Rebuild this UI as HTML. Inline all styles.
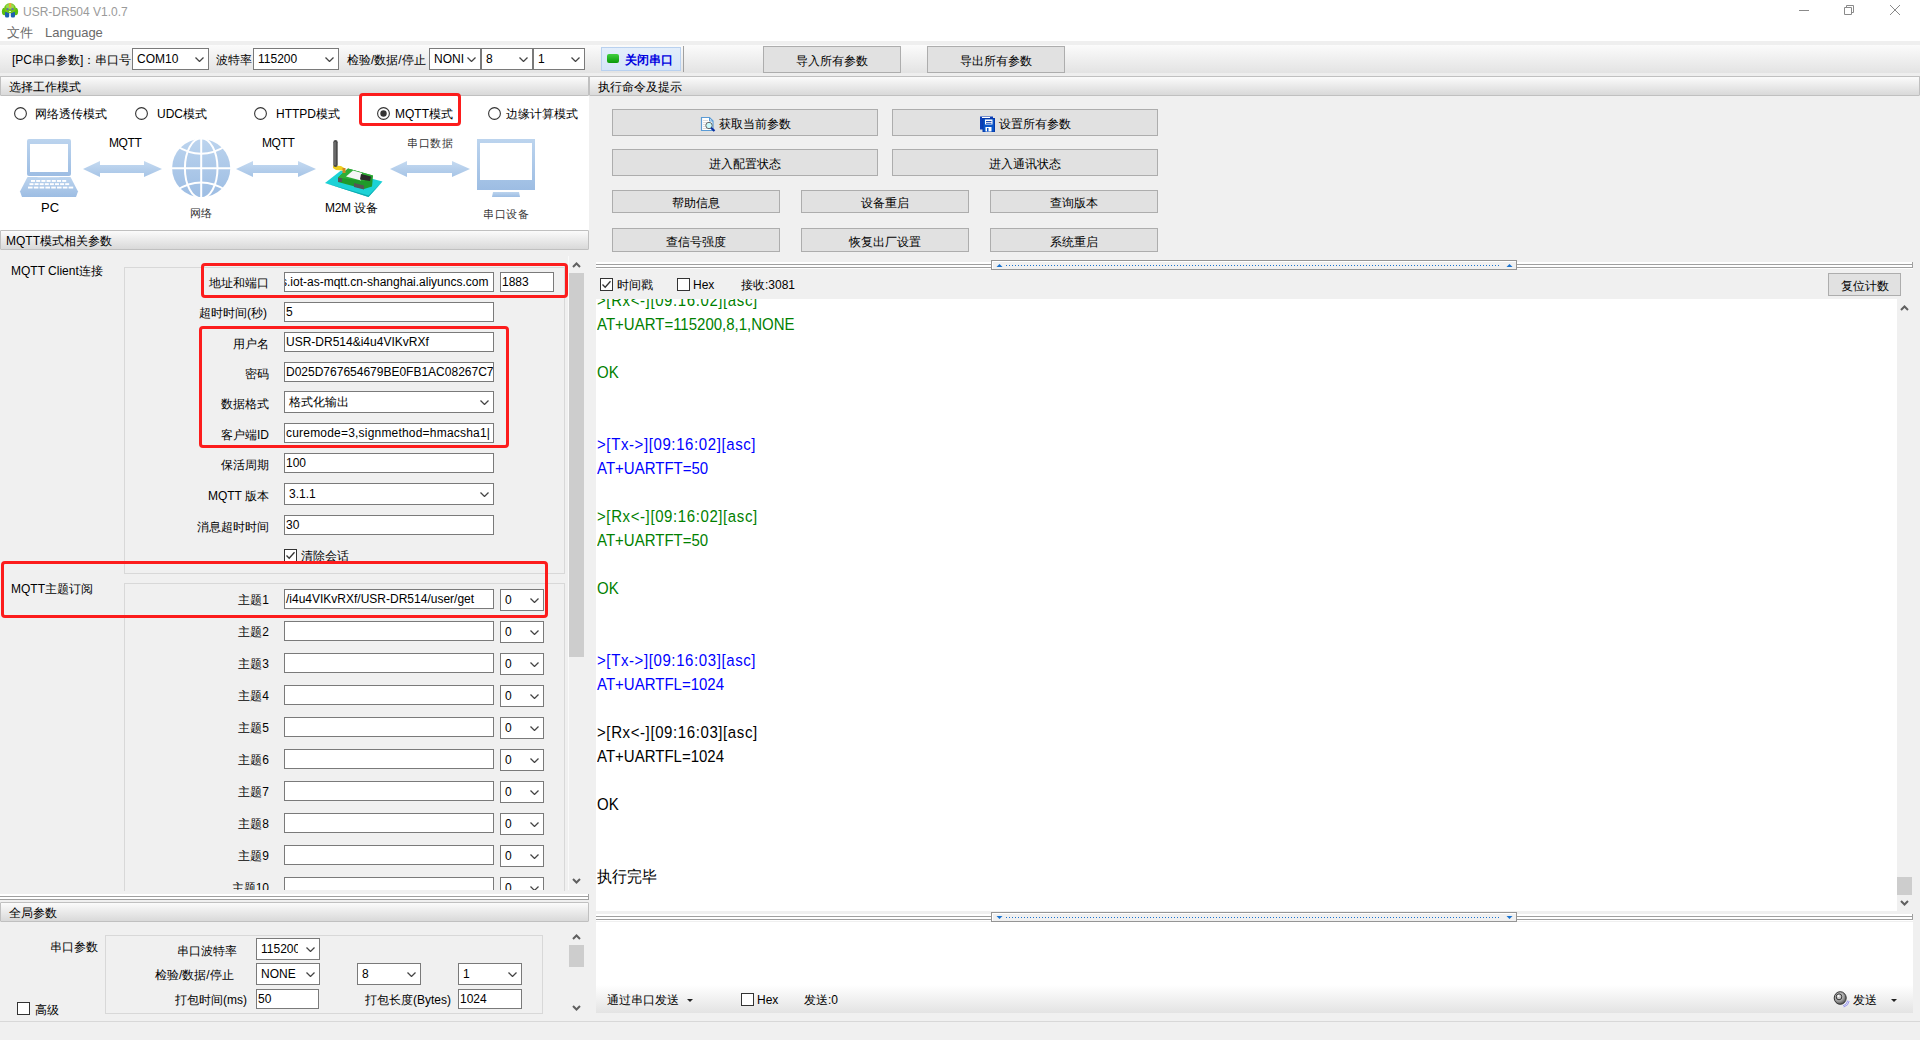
<!DOCTYPE html><html><head><meta charset="utf-8"><style>
html,body{margin:0;padding:0;}
body{width:1920px;height:1040px;position:relative;overflow:hidden;background:#f0f0f0;font-family:"Liberation Sans",sans-serif;font-size:12px;color:#000;}
div{position:absolute;box-sizing:content-box;}
.t{white-space:nowrap;line-height:14px;}
.sel{background:#fff;border:1px solid #7a7a7a;}
.sel .st{position:absolute;left:4px;top:0;bottom:0;display:flex;align-items:center;white-space:nowrap;}
.sel .cv{position:absolute;right:4px;}
.chev{display:block}
.inp{background:#fff;border:1px solid #7a7a7a;white-space:nowrap;overflow:hidden;padding-left:0;text-indent:1px;}
.btn{background:#e1e1e1;border:1px solid #adadad;text-align:center;white-space:nowrap;}
.hdr{background:linear-gradient(#fbfbfb,#d9d9d9);border:1px solid #c0c0c0;border-radius:1px;}
.red{border:3px solid #fc1c1c;border-radius:4px;}
.rad{width:11px;height:11px;border:1px solid #333;border-radius:50%;background:#fff;}
.cb{width:11px;height:11px;border:1px solid #333;background:#fff;}
.log{font-size:15px;line-height:24px;white-space:pre;transform:scaleY(1.07);transform-origin:0 18px;}
</style></head><body>

<div class="" style="left:0px;top:0px;width:1920px;height:41px;background:#fff"></div>
<svg style="position:absolute;left:0;top:0" width="22" height="22" viewBox="0 0 22 22">
<ellipse cx="4.3" cy="11.5" rx="2.4" ry="3.8" fill="#5cbf10"/>
<ellipse cx="15.7" cy="11.5" rx="2.4" ry="3.8" fill="#5cbf10"/>
<rect x="5" y="11.5" width="4.2" height="6" rx="1.5" fill="#1e5fae"/>
<rect x="10.8" y="11.5" width="4.2" height="6" rx="1.5" fill="#1e5fae"/>
<ellipse cx="10" cy="8.3" rx="5.8" ry="5" fill="#72c818"/>
<ellipse cx="10" cy="6.5" rx="4" ry="2.5" fill="#9ad850"/>
<rect x="9" y="3" width="2.2" height="4.5" rx="1" fill="#f0a838"/>
<circle cx="7.5" cy="9.2" r="1.1" fill="#6a62c0"/><circle cx="12.5" cy="9.2" r="1.1" fill="#6a62c0"/>
<rect x="9" y="11" width="2" height="0.9" fill="#eee"/>
</svg>
<div class="t" style="left:23px;top:5px;color:#9a9a9a;font-size:12px;line-height:14px">USR-DR504 V1.0.7</div>
<div class="t" style="left:7px;top:26px;color:#6a6a6a;font-size:13px;line-height:14px">文件</div>
<div class="t" style="left:45px;top:26px;color:#6a6a6a;font-size:13px;line-height:14px">Language</div>
<svg style="position:absolute;left:1795px;top:3px" width="110" height="16" viewBox="0 0 110 16">
<path d="M4 7.5 H14" stroke="#8a8a8a" stroke-width="1"/>
<path d="M49.5 4.5 H56.5 V11.5 H49.5 Z M51.5 4.5 V2.5 H58.5 V9.5 H56.5" fill="none" stroke="#8a8a8a" stroke-width="1"/>
<path d="M95 2 L105 12 M105 2 L95 12" stroke="#8a8a8a" stroke-width="1"/>
</svg>
<div class="" style="left:0px;top:41px;width:1920px;height:35px;background:linear-gradient(#efefef 0px,#efefef 4px,#fbfbfb 4px,#e3e3e3 32px,#eeeeee 32px,#eeeeee 35px);border-bottom:1px solid #c5c5c5"></div>
<div class="t" style="left:12px;top:53px;">[PC串口参数]：串口号</div>
<div class="sel" style="left:132px;top:48px;width:75px;height:20px;"><span class="st">COM10</span><span class="cv" style="top:8px"><svg class="chev" width="9" height="5" viewBox="0 0 9 5"><path d="M0.5 0.5 L4.5 4.5 L8.5 0.5" fill="none" stroke="#444" stroke-width="1.25"/></svg></span></div>
<div class="t" style="left:216px;top:53px;">波特率</div>
<div class="sel" style="left:253px;top:48px;width:84px;height:20px;"><span class="st">115200</span><span class="cv" style="top:8px"><svg class="chev" width="9" height="5" viewBox="0 0 9 5"><path d="M0.5 0.5 L4.5 4.5 L8.5 0.5" fill="none" stroke="#444" stroke-width="1.25"/></svg></span></div>
<div class="t" style="left:347px;top:53px;">检验/数据/停止</div>
<div class="sel" style="left:429px;top:48px;width:50px;height:20px;"><span class="st">NONI</span><span class="cv" style="top:8px"><svg class="chev" width="9" height="5" viewBox="0 0 9 5"><path d="M0.5 0.5 L4.5 4.5 L8.5 0.5" fill="none" stroke="#444" stroke-width="1.25"/></svg></span></div>
<div class="sel" style="left:481px;top:48px;width:50px;height:20px;"><span class="st">8</span><span class="cv" style="top:8px"><svg class="chev" width="9" height="5" viewBox="0 0 9 5"><path d="M0.5 0.5 L4.5 4.5 L8.5 0.5" fill="none" stroke="#444" stroke-width="1.25"/></svg></span></div>
<div class="sel" style="left:533px;top:48px;width:50px;height:20px;"><span class="st">1</span><span class="cv" style="top:8px"><svg class="chev" width="9" height="5" viewBox="0 0 9 5"><path d="M0.5 0.5 L4.5 4.5 L8.5 0.5" fill="none" stroke="#444" stroke-width="1.25"/></svg></span></div>
<div style="left:601px;top:47px;width:78px;height:22px;background:linear-gradient(#e3eefb,#d5e5f8);border:1px solid #b9d1ef;"></div>
<div style="left:607px;top:54px;width:12px;height:9px;border-radius:2px;background:linear-gradient(#40d040,#0a9a0a);"></div>
<div class="t" style="left:625px;top:53px;color:#0000e0;font-weight:bold">关闭串口</div>
<div class="" style="left:683px;top:46px;width:1px;height:26px;background:#a0a0a0"></div>
<div class="btn" style="left:763px;top:46px;width:136px;height:25px;"><div style="left:0;right:0;top:2px;line-height:25px;display:flex;justify-content:center;align-items:center;height:25px">导入所有参数</div></div>
<div class="btn" style="left:927px;top:46px;width:136px;height:25px;"><div style="left:0;right:0;top:2px;line-height:25px;display:flex;justify-content:center;align-items:center;height:25px">导出所有参数</div></div>
<div class="hdr" style="left:0px;top:76px;width:587px;height:18px;"><span style="position:absolute;left:8px;top:1px;line-height:18px;white-space:nowrap">选择工作模式</span></div>
<div class="" style="left:0px;top:96px;width:589px;height:134px;background:#fff"></div>
<svg style="position:absolute;left:14px;top:107px" width="13" height="13" viewBox="0 0 13 13"><circle cx="6.5" cy="6.5" r="5.9" fill="#fff" stroke="#333" stroke-width="1.1"/></svg>
<div class="t" style="left:35px;top:107px;">网络透传模式</div>
<svg style="position:absolute;left:135px;top:107px" width="13" height="13" viewBox="0 0 13 13"><circle cx="6.5" cy="6.5" r="5.9" fill="#fff" stroke="#333" stroke-width="1.1"/></svg>
<div class="t" style="left:157px;top:107px;">UDC模式</div>
<svg style="position:absolute;left:254px;top:107px" width="13" height="13" viewBox="0 0 13 13"><circle cx="6.5" cy="6.5" r="5.9" fill="#fff" stroke="#333" stroke-width="1.1"/></svg>
<div class="t" style="left:276px;top:107px;">HTTPD模式</div>
<svg style="position:absolute;left:377px;top:107px" width="13" height="13" viewBox="0 0 13 13"><circle cx="6.5" cy="6.5" r="5.9" fill="#fff" stroke="#333" stroke-width="1.1"/><circle cx="6.5" cy="6.5" r="3.2" fill="#333"/></svg>
<div class="t" style="left:395px;top:107px;">MQTT模式</div>
<svg style="position:absolute;left:488px;top:107px" width="13" height="13" viewBox="0 0 13 13"><circle cx="6.5" cy="6.5" r="5.9" fill="#fff" stroke="#333" stroke-width="1.1"/></svg>
<div class="t" style="left:506px;top:107px;">边缘计算模式</div>
<div class="red" style="left:359px;top:93px;width:96px;height:27px;"></div>
<svg style="position:absolute;left:0;top:130px" width="588" height="95" viewBox="0 130 588 95">
<defs>
<linearGradient id="bl" x1="0" y1="0" x2="0" y2="1"><stop offset="0" stop-color="#bcd4ee"/><stop offset="1" stop-color="#9dbde3"/></linearGradient>
<linearGradient id="ar" x1="0" y1="0" x2="0" y2="1"><stop offset="0" stop-color="#c5daf1"/><stop offset="1" stop-color="#a6c4e6"/></linearGradient>
</defs>
<!-- laptop -->
<rect x="27" y="139" width="44" height="37" rx="2" fill="url(#bl)"/>
<rect x="30" y="144" width="38" height="28" fill="#fff"/>
<path d="M27.5 177 H70.5 L78 191.5 L76 197 H22 L20 191.5 Z" fill="url(#bl)"/><rect x="37.5" y="176" width="22" height="1.2" fill="#fff"/>
<g fill="#fff"><rect x="31.0" y="180" width="4" height="1.9"/><rect x="36.2" y="180" width="4" height="1.9"/><rect x="41.4" y="180" width="4" height="1.9"/><rect x="46.6" y="180" width="4" height="1.9"/><rect x="51.8" y="180" width="4" height="1.9"/><rect x="57.0" y="180" width="4" height="1.9"/><rect x="62.2" y="180" width="4" height="1.9"/><rect x="29.5" y="183.2" width="4" height="1.9"/><rect x="34.6" y="183.2" width="4" height="1.9"/><rect x="39.7" y="183.2" width="4" height="1.9"/><rect x="44.8" y="183.2" width="4" height="1.9"/><rect x="49.9" y="183.2" width="4" height="1.9"/><rect x="55.0" y="183.2" width="4" height="1.9"/><rect x="60.1" y="183.2" width="4" height="1.9"/><rect x="65.2" y="183.2" width="4" height="1.9"/><rect x="28.0" y="186.6" width="4.6" height="1.9"/><rect x="33.8" y="186.6" width="4.6" height="1.9"/><rect x="39.6" y="186.6" width="4.6" height="1.9"/><rect x="45.4" y="186.6" width="4.6" height="1.9"/><rect x="51.2" y="186.6" width="4.6" height="1.9"/><rect x="57.0" y="186.6" width="4.6" height="1.9"/><rect x="62.8" y="186.6" width="4.6" height="1.9"/><rect x="68.6" y="186.6" width="4.6" height="1.9"/></g>
<!-- arrows -->
<path d="M83 169 L100 161 V165 H144 V161 L162 169 L144 177 V173 H100 V177 Z" fill="url(#ar)"/>
<path d="M236 169 L253 161 V165 H298 V161 L316 169 L298 177 V173 H253 V177 Z" fill="url(#ar)"/>
<path d="M390 169 L407 161 V165 H452 V161 L470 169 L452 177 V173 H407 V177 Z" fill="url(#ar)"/>
<!-- globe -->
<circle cx="201.2" cy="168.2" r="29.1" fill="url(#bl)"/>
<g fill="none" stroke="#fff" stroke-width="2">
<path d="M201.2 139 V198"/><path d="M172 168.2 H231"/>
<ellipse cx="201.2" cy="168.2" rx="16.3" ry="30"/>
<path d="M176 145.5 Q201.2 162 226.4 145.5"/><path d="M176 190.5 Q201.2 174.5 226.4 190.5"/>
</g>
<!-- m2m device -->
<path d="M325 183 L341 170.5 L382.5 181.5 L368.5 197 Z" fill="#1cd2d6"/>
<path d="M325 183 L368.5 197 L382.5 181.5 L368.5 195.5 Z" fill="#0fa8ad"/>
<path d="M338 177.5 L348 168.5 L373 175.5 L372 186.5 L364 189 L338 182 Z" fill="#1f9a2a"/>
<path d="M338 177.5 L348 168.5 L373 175.5 L364 181 Z" fill="#2fae36"/>
<path d="M346 176.5 L353 170.5 L362 173 L361 180.5 Z" fill="#f6f6f6"/>
<path d="M361 174 L371 176.5 L370 181 L360 179.5 Z" fill="#2a2a2a"/>
<rect x="338" y="178" width="4" height="4" fill="#555"/>
<path d="M354 183 L364 185.5 L364 189.5 L354 187 Z" fill="#555"/>
<path d="M333 165.5 L341 166 L345 168.5 L345 170.5 L336 170 L333 168 Z" fill="#f0d020"/>
<rect x="342.5" y="168" width="3" height="5" fill="#d08a20"/>
<rect x="333.3" y="140" width="4.4" height="27" rx="2.2" fill="#4a4a4a"/>
<rect x="334.3" y="142" width="1.4" height="23" fill="#777"/>
<!-- monitor -->
<rect x="477" y="139" width="58" height="51" fill="url(#bl)"/>
<rect x="480" y="143" width="52" height="37" fill="#fff"/>
<path d="M493 192 H519 L520 197 H492 Z" fill="url(#bl)"/>
</svg>
<div class="t" style="left:109px;top:136px;font-size:12px;letter-spacing:-0.4px">MQTT</div>
<div class="t" style="left:262px;top:136px;font-size:12px;letter-spacing:-0.4px">MQTT</div>
<div class="t" style="left:407px;top:136px;font-size:11px;letter-spacing:0.5px;color:#333">串口数据</div>
<div class="t" style="left:41px;top:201px;font-size:13px">PC</div>
<div class="t" style="left:190px;top:206px;font-size:11px;color:#333">网络</div>
<div class="t" style="left:325px;top:201px;font-size:12px;letter-spacing:-0.3px">M2M 设备</div>
<div class="t" style="left:483px;top:207px;font-size:11px;letter-spacing:0.5px;color:#333">串口设备</div>
<div class="hdr" style="left:0px;top:230px;width:587px;height:18px;"><span style="position:absolute;left:5px;top:1px;line-height:18px;white-space:nowrap">MQTT模式相关参数</span></div>
<div class="" style="left:124px;top:267px;width:439px;height:305px;border:1px solid #d8d8d8;background:transparent"></div>
<div class="t" style="left:11px;top:264px;">MQTT Client连接</div>
<div class="t" style="left:209px;top:276px;">地址和端口</div>
<div class="inp" style="left:284px;top:272px;width:208px;height:18px;line-height:18px;text-indent:-4px">s.iot-as-mqtt.cn-shanghai.aliyuncs.com</div>
<div class="inp" style="left:500px;top:272px;width:52px;height:18px;line-height:18px;">1883</div>
<div class="red" style="left:201px;top:263px;width:361px;height:29px;"></div>
<div class="t" style="left:199px;top:306px;">超时时间(秒)</div>
<div class="inp" style="left:284px;top:302px;width:208px;height:18px;line-height:18px;">5</div>
<div class="t" style="right:1651px;top:337px">用户名</div>
<div class="inp" style="left:284px;top:332px;width:208px;height:18px;line-height:18px;">USR-DR514&amp;i4u4VIKvRXf</div>
<div class="t" style="right:1651px;top:367px">密码</div>
<div class="inp" style="left:284px;top:362px;width:208px;height:18px;line-height:18px;">D025D767654679BE0FB1AC08267C7</div>
<div class="t" style="right:1651px;top:397px">数据格式</div>
<div class="sel" style="left:284px;top:391px;width:208px;height:20px;"><span class="st">格式化输出</span><span class="cv" style="top:8px"><svg class="chev" width="9" height="5" viewBox="0 0 9 5"><path d="M0.5 0.5 L4.5 4.5 L8.5 0.5" fill="none" stroke="#444" stroke-width="1.25"/></svg></span></div>
<div class="t" style="right:1651px;top:428px">客户端ID</div>
<div class="inp" style="left:284px;top:423px;width:208px;height:18px;line-height:18px;"><span style="letter-spacing:0.2px">curemode=3,signmethod=hmacsha1</span>|</div>
<div class="t" style="right:1651px;top:458px">保活周期</div>
<div class="inp" style="left:284px;top:453px;width:208px;height:18px;line-height:18px;">100</div>
<div class="t" style="right:1651px;top:489px">MQTT 版本</div>
<div class="sel" style="left:284px;top:483px;width:208px;height:20px;"><span class="st">3.1.1</span><span class="cv" style="top:8px"><svg class="chev" width="9" height="5" viewBox="0 0 9 5"><path d="M0.5 0.5 L4.5 4.5 L8.5 0.5" fill="none" stroke="#444" stroke-width="1.25"/></svg></span></div>
<div class="t" style="right:1651px;top:520px">消息超时时间</div>
<div class="inp" style="left:284px;top:515px;width:208px;height:18px;line-height:18px;">30</div>
<div class="red" style="left:199px;top:326px;width:304px;height:116px;"></div>
<div style="left:280px;top:545px;width:100px;height:17px;overflow:hidden">
<div class="cb" style="left:4px;top:4px;"><svg width="11" height="11" viewBox="0 0 11 11" style="position:absolute;left:0;top:0"><path d="M1.5 5.5 L4.2 8.3 L9.5 2.2" fill="none" stroke="#333" stroke-width="1.3"/></svg></div>
<div class="t" style="left:21px;top:4px">清除会话</div></div>
<div class="" style="left:124px;top:583px;width:439px;height:307px;border:1px solid #d8d8d8;border-bottom:none"></div>
<div class="t" style="left:11px;top:582px;">MQTT主题订阅</div>
<div style="left:0;top:589px;width:568px;height:22px;overflow:hidden">
<div class="t" style="right:299px;top:4px">主题1</div>
<div class="inp" style="left:284px;top:0px;width:208px;height:18px;line-height:18px;">/i4u4VIKvRXf/USR-DR514/user/get</div>
<div class="sel" style="left:500px;top:0px;width:42px;height:20px;"><span class="st">0</span><span class="cv" style="top:8px"><svg class="chev" width="9" height="5" viewBox="0 0 9 5"><path d="M0.5 0.5 L4.5 4.5 L8.5 0.5" fill="none" stroke="#444" stroke-width="1.25"/></svg></span></div>
</div>
<div style="left:0;top:621px;width:568px;height:22px;overflow:hidden">
<div class="t" style="right:299px;top:4px">主题2</div>
<div class="inp" style="left:284px;top:0px;width:208px;height:18px;line-height:18px;"></div>
<div class="sel" style="left:500px;top:0px;width:42px;height:20px;"><span class="st">0</span><span class="cv" style="top:8px"><svg class="chev" width="9" height="5" viewBox="0 0 9 5"><path d="M0.5 0.5 L4.5 4.5 L8.5 0.5" fill="none" stroke="#444" stroke-width="1.25"/></svg></span></div>
</div>
<div style="left:0;top:653px;width:568px;height:22px;overflow:hidden">
<div class="t" style="right:299px;top:4px">主题3</div>
<div class="inp" style="left:284px;top:0px;width:208px;height:18px;line-height:18px;"></div>
<div class="sel" style="left:500px;top:0px;width:42px;height:20px;"><span class="st">0</span><span class="cv" style="top:8px"><svg class="chev" width="9" height="5" viewBox="0 0 9 5"><path d="M0.5 0.5 L4.5 4.5 L8.5 0.5" fill="none" stroke="#444" stroke-width="1.25"/></svg></span></div>
</div>
<div style="left:0;top:685px;width:568px;height:22px;overflow:hidden">
<div class="t" style="right:299px;top:4px">主题4</div>
<div class="inp" style="left:284px;top:0px;width:208px;height:18px;line-height:18px;"></div>
<div class="sel" style="left:500px;top:0px;width:42px;height:20px;"><span class="st">0</span><span class="cv" style="top:8px"><svg class="chev" width="9" height="5" viewBox="0 0 9 5"><path d="M0.5 0.5 L4.5 4.5 L8.5 0.5" fill="none" stroke="#444" stroke-width="1.25"/></svg></span></div>
</div>
<div style="left:0;top:717px;width:568px;height:22px;overflow:hidden">
<div class="t" style="right:299px;top:4px">主题5</div>
<div class="inp" style="left:284px;top:0px;width:208px;height:18px;line-height:18px;"></div>
<div class="sel" style="left:500px;top:0px;width:42px;height:20px;"><span class="st">0</span><span class="cv" style="top:8px"><svg class="chev" width="9" height="5" viewBox="0 0 9 5"><path d="M0.5 0.5 L4.5 4.5 L8.5 0.5" fill="none" stroke="#444" stroke-width="1.25"/></svg></span></div>
</div>
<div style="left:0;top:749px;width:568px;height:22px;overflow:hidden">
<div class="t" style="right:299px;top:4px">主题6</div>
<div class="inp" style="left:284px;top:0px;width:208px;height:18px;line-height:18px;"></div>
<div class="sel" style="left:500px;top:0px;width:42px;height:20px;"><span class="st">0</span><span class="cv" style="top:8px"><svg class="chev" width="9" height="5" viewBox="0 0 9 5"><path d="M0.5 0.5 L4.5 4.5 L8.5 0.5" fill="none" stroke="#444" stroke-width="1.25"/></svg></span></div>
</div>
<div style="left:0;top:781px;width:568px;height:22px;overflow:hidden">
<div class="t" style="right:299px;top:4px">主题7</div>
<div class="inp" style="left:284px;top:0px;width:208px;height:18px;line-height:18px;"></div>
<div class="sel" style="left:500px;top:0px;width:42px;height:20px;"><span class="st">0</span><span class="cv" style="top:8px"><svg class="chev" width="9" height="5" viewBox="0 0 9 5"><path d="M0.5 0.5 L4.5 4.5 L8.5 0.5" fill="none" stroke="#444" stroke-width="1.25"/></svg></span></div>
</div>
<div style="left:0;top:813px;width:568px;height:22px;overflow:hidden">
<div class="t" style="right:299px;top:4px">主题8</div>
<div class="inp" style="left:284px;top:0px;width:208px;height:18px;line-height:18px;"></div>
<div class="sel" style="left:500px;top:0px;width:42px;height:20px;"><span class="st">0</span><span class="cv" style="top:8px"><svg class="chev" width="9" height="5" viewBox="0 0 9 5"><path d="M0.5 0.5 L4.5 4.5 L8.5 0.5" fill="none" stroke="#444" stroke-width="1.25"/></svg></span></div>
</div>
<div style="left:0;top:845px;width:568px;height:22px;overflow:hidden">
<div class="t" style="right:299px;top:4px">主题9</div>
<div class="inp" style="left:284px;top:0px;width:208px;height:18px;line-height:18px;"></div>
<div class="sel" style="left:500px;top:0px;width:42px;height:20px;"><span class="st">0</span><span class="cv" style="top:8px"><svg class="chev" width="9" height="5" viewBox="0 0 9 5"><path d="M0.5 0.5 L4.5 4.5 L8.5 0.5" fill="none" stroke="#444" stroke-width="1.25"/></svg></span></div>
</div>
<div style="left:0;top:877px;width:568px;height:13px;overflow:hidden">
<div class="t" style="right:299px;top:4px">主题10</div>
<div class="inp" style="left:284px;top:0px;width:208px;height:18px;line-height:18px;"></div>
<div class="sel" style="left:500px;top:0px;width:42px;height:20px;"><span class="st">0</span><span class="cv" style="top:8px"><svg class="chev" width="9" height="5" viewBox="0 0 9 5"><path d="M0.5 0.5 L4.5 4.5 L8.5 0.5" fill="none" stroke="#444" stroke-width="1.25"/></svg></span></div>
</div>
<div class="red" style="left:1px;top:561px;width:541px;height:51px;"></div>
<div class="" style="left:568px;top:256px;width:1px;height:634px;background:#fafafa"></div>
<svg style="position:absolute;left:571px;top:261px" width="11" height="8"><path d="M2 6 L5.5 2.5 L9 6" fill="none" stroke="#606060" stroke-width="2"/></svg>
<div class="" style="left:569px;top:273px;width:15px;height:384px;background:#cdcdcd"></div>
<svg style="position:absolute;left:571px;top:877px" width="11" height="8"><path d="M2 2 L5.5 5.5 L9 2" fill="none" stroke="#606060" stroke-width="2"/></svg>
<div class="" style="left:0px;top:894px;width:588px;height:6px;background:#fff"></div>
<div class="" style="left:0px;top:896px;width:588px;height:1px;background:#a0a0a0"></div>
<div class="" style="left:0px;top:899px;width:589px;height:1px;background:#a0a0a0"></div>
<div class="" style="left:588px;top:894px;width:1px;height:6px;background:#a0a0a0"></div>
<div class="hdr" style="left:0px;top:902px;width:587px;height:18px;"><span style="position:absolute;left:8px;top:1px;line-height:18px;white-space:nowrap">全局参数</span></div>
<div class="" style="left:105px;top:935px;width:436px;height:77px;border:1px solid #d8d8d8"></div>
<div class="t" style="left:50px;top:940px;">串口参数</div>
<div class="t" style="left:177px;top:944px;">串口波特率</div>
<div class="sel" style="left:256px;top:938px;width:62px;height:20px;"><span class="st"><span style="display:inline-block;width:37px;overflow:hidden">115200</span></span><span class="cv" style="top:8px"><svg class="chev" width="9" height="5" viewBox="0 0 9 5"><path d="M0.5 0.5 L4.5 4.5 L8.5 0.5" fill="none" stroke="#444" stroke-width="1.25"/></svg></span></div>
<div class="t" style="left:155px;top:968px;">检验/数据/停止</div>
<div class="sel" style="left:256px;top:963px;width:62px;height:20px;"><span class="st">NONE</span><span class="cv" style="top:8px"><svg class="chev" width="9" height="5" viewBox="0 0 9 5"><path d="M0.5 0.5 L4.5 4.5 L8.5 0.5" fill="none" stroke="#444" stroke-width="1.25"/></svg></span></div>
<div class="sel" style="left:357px;top:963px;width:62px;height:20px;"><span class="st">8</span><span class="cv" style="top:8px"><svg class="chev" width="9" height="5" viewBox="0 0 9 5"><path d="M0.5 0.5 L4.5 4.5 L8.5 0.5" fill="none" stroke="#444" stroke-width="1.25"/></svg></span></div>
<div class="sel" style="left:458px;top:963px;width:62px;height:20px;"><span class="st">1</span><span class="cv" style="top:8px"><svg class="chev" width="9" height="5" viewBox="0 0 9 5"><path d="M0.5 0.5 L4.5 4.5 L8.5 0.5" fill="none" stroke="#444" stroke-width="1.25"/></svg></span></div>
<div class="t" style="left:175px;top:993px;">打包时间(ms)</div>
<div class="inp" style="left:256px;top:989px;width:61px;height:18px;line-height:18px;">50</div>
<div class="t" style="left:365px;top:993px;">打包长度(Bytes)</div>
<div class="inp" style="left:458px;top:989px;width:62px;height:18px;line-height:18px;">1024</div>
<div class="cb" style="left:17px;top:1002px;"></div>
<div class="t" style="left:35px;top:1003px;">高级</div>
<svg style="position:absolute;left:571px;top:933px" width="11" height="8"><path d="M2 6 L5.5 2.5 L9 6" fill="none" stroke="#606060" stroke-width="2"/></svg>
<div class="" style="left:569px;top:945px;width:15px;height:22px;background:#cdcdcd"></div>
<svg style="position:absolute;left:571px;top:1004px" width="11" height="8"><path d="M2 2 L5.5 5.5 L9 2" fill="none" stroke="#606060" stroke-width="2"/></svg>
<div class="hdr" style="left:589px;top:76px;width:1329px;height:18px;"><span style="position:absolute;left:8px;top:1px;line-height:18px;white-space:nowrap">执行命令及提示</span></div>
<div class="btn" style="left:612px;top:109px;width:264px;height:25px;"><div style="left:0;right:0;top:2px;line-height:25px;display:flex;justify-content:center;align-items:center;height:25px"><svg width="16" height="16" viewBox="0 0 16 16" style="margin-right:3px;margin-top:-1px"><path d="M1.5 1.5 H9.5 L13 5 V14.5 H1.5 Z" fill="#fff" stroke="#5b9bd5" stroke-width="1.2"/><path d="M9.5 1.5 V5 H13" fill="none" stroke="#5b9bd5" stroke-width="1"/><g fill="#ddd"><rect x="3" y="4" width="5" height="1"/><rect x="3" y="6" width="5" height="1"/><rect x="3" y="8" width="3" height="1"/><rect x="3" y="10" width="3" height="1"/><rect x="3" y="12" width="4" height="1"/></g><circle cx="9" cy="9.5" r="3.2" fill="#c8f8fa" stroke="#666" stroke-width="1"/><path d="M11 11.8 L14.5 15" stroke="#0a2fa0" stroke-width="2.2"/></svg>获取当前参数</div></div>
<div class="btn" style="left:892px;top:109px;width:264px;height:25px;"><div style="left:0;right:0;top:2px;line-height:25px;display:flex;justify-content:center;align-items:center;height:25px"><svg width="16" height="16" viewBox="0 0 16 16" style="margin-right:4px;margin-top:-1px"><rect x="1" y="0.5" width="13" height="13" fill="#0c3fb8"/><rect x="4" y="2.5" width="11.5" height="13.5" fill="#0a55c8" stroke="#0638a8" stroke-width="1"/><rect x="6" y="3.5" width="7.5" height="5" fill="#fff"/><rect x="7" y="5" width="5.5" height="0.9" fill="#0638a8"/><rect x="7" y="6.8" width="5.5" height="0.9" fill="#0638a8"/><rect x="6.5" y="11" width="6" height="4.5" fill="#fff"/><rect x="8" y="12" width="1.5" height="3.5" fill="#0a55c8"/><rect x="3" y="1" width="8" height="1" fill="#fff"/></svg>设置所有参数</div></div>
<div class="btn" style="left:612px;top:149px;width:264px;height:25px;"><div style="left:0;right:0;top:2px;line-height:25px;display:flex;justify-content:center;align-items:center;height:25px">进入配置状态</div></div>
<div class="btn" style="left:892px;top:149px;width:264px;height:25px;"><div style="left:0;right:0;top:2px;line-height:25px;display:flex;justify-content:center;align-items:center;height:25px">进入通讯状态</div></div>
<div class="btn" style="left:612px;top:190px;width:166px;height:21px;"><div style="left:0;right:0;top:2px;line-height:21px;display:flex;justify-content:center;align-items:center;height:21px">帮助信息</div></div>
<div class="btn" style="left:801px;top:190px;width:166px;height:21px;"><div style="left:0;right:0;top:2px;line-height:21px;display:flex;justify-content:center;align-items:center;height:21px">设备重启</div></div>
<div class="btn" style="left:990px;top:190px;width:166px;height:21px;"><div style="left:0;right:0;top:2px;line-height:21px;display:flex;justify-content:center;align-items:center;height:21px">查询版本</div></div>
<div class="btn" style="left:612px;top:228px;width:166px;height:22px;"><div style="left:0;right:0;top:2px;line-height:22px;display:flex;justify-content:center;align-items:center;height:22px">查信号强度</div></div>
<div class="btn" style="left:801px;top:228px;width:166px;height:22px;"><div style="left:0;right:0;top:2px;line-height:22px;display:flex;justify-content:center;align-items:center;height:22px">恢复出厂设置</div></div>
<div class="btn" style="left:990px;top:228px;width:166px;height:22px;"><div style="left:0;right:0;top:2px;line-height:22px;display:flex;justify-content:center;align-items:center;height:22px">系统重启</div></div>
<div style="left:596px;top:262px;width:1317px;height:7px;background:#fff"></div>
<div style="left:596px;top:264px;width:1316px;height:1px;background:#a0a0a0"></div>
<div style="left:596px;top:267px;width:1316px;height:1px;background:#a0a0a0"></div>
<div style="left:1912px;top:262px;width:1px;height:6px;background:#a0a0a0"></div>
<svg style="position:absolute;left:991px;top:260px" width="527" height="10" viewBox="0 0 527 10"><rect x="0.5" y="0.5" width="525" height="9" fill="#f0f0f0" stroke="#959595"/><path d="M1.5 9 V1.5 H525" fill="none" stroke="#fff"/><g fill="#1a73d0"><path d="M5.5 7 L8.5 4 L11.5 7 Z"/><path d="M515.5 7 L518.5 4 L521.5 7 Z"/><rect x="15" y="5" width="1" height="1"/><rect x="18" y="5" width="1" height="1"/><rect x="21" y="5" width="1" height="1"/><rect x="24" y="5" width="1" height="1"/><rect x="27" y="5" width="1" height="1"/><rect x="30" y="5" width="1" height="1"/><rect x="33" y="5" width="1" height="1"/><rect x="36" y="5" width="1" height="1"/><rect x="39" y="5" width="1" height="1"/><rect x="42" y="5" width="1" height="1"/><rect x="45" y="5" width="1" height="1"/><rect x="48" y="5" width="1" height="1"/><rect x="51" y="5" width="1" height="1"/><rect x="54" y="5" width="1" height="1"/><rect x="57" y="5" width="1" height="1"/><rect x="60" y="5" width="1" height="1"/><rect x="63" y="5" width="1" height="1"/><rect x="66" y="5" width="1" height="1"/><rect x="69" y="5" width="1" height="1"/><rect x="72" y="5" width="1" height="1"/><rect x="75" y="5" width="1" height="1"/><rect x="78" y="5" width="1" height="1"/><rect x="81" y="5" width="1" height="1"/><rect x="84" y="5" width="1" height="1"/><rect x="87" y="5" width="1" height="1"/><rect x="90" y="5" width="1" height="1"/><rect x="93" y="5" width="1" height="1"/><rect x="96" y="5" width="1" height="1"/><rect x="99" y="5" width="1" height="1"/><rect x="102" y="5" width="1" height="1"/><rect x="105" y="5" width="1" height="1"/><rect x="108" y="5" width="1" height="1"/><rect x="111" y="5" width="1" height="1"/><rect x="114" y="5" width="1" height="1"/><rect x="117" y="5" width="1" height="1"/><rect x="120" y="5" width="1" height="1"/><rect x="123" y="5" width="1" height="1"/><rect x="126" y="5" width="1" height="1"/><rect x="129" y="5" width="1" height="1"/><rect x="132" y="5" width="1" height="1"/><rect x="135" y="5" width="1" height="1"/><rect x="138" y="5" width="1" height="1"/><rect x="141" y="5" width="1" height="1"/><rect x="144" y="5" width="1" height="1"/><rect x="147" y="5" width="1" height="1"/><rect x="150" y="5" width="1" height="1"/><rect x="153" y="5" width="1" height="1"/><rect x="156" y="5" width="1" height="1"/><rect x="159" y="5" width="1" height="1"/><rect x="162" y="5" width="1" height="1"/><rect x="165" y="5" width="1" height="1"/><rect x="168" y="5" width="1" height="1"/><rect x="171" y="5" width="1" height="1"/><rect x="174" y="5" width="1" height="1"/><rect x="177" y="5" width="1" height="1"/><rect x="180" y="5" width="1" height="1"/><rect x="183" y="5" width="1" height="1"/><rect x="186" y="5" width="1" height="1"/><rect x="189" y="5" width="1" height="1"/><rect x="192" y="5" width="1" height="1"/><rect x="195" y="5" width="1" height="1"/><rect x="198" y="5" width="1" height="1"/><rect x="201" y="5" width="1" height="1"/><rect x="204" y="5" width="1" height="1"/><rect x="207" y="5" width="1" height="1"/><rect x="210" y="5" width="1" height="1"/><rect x="213" y="5" width="1" height="1"/><rect x="216" y="5" width="1" height="1"/><rect x="219" y="5" width="1" height="1"/><rect x="222" y="5" width="1" height="1"/><rect x="225" y="5" width="1" height="1"/><rect x="228" y="5" width="1" height="1"/><rect x="231" y="5" width="1" height="1"/><rect x="234" y="5" width="1" height="1"/><rect x="237" y="5" width="1" height="1"/><rect x="240" y="5" width="1" height="1"/><rect x="243" y="5" width="1" height="1"/><rect x="246" y="5" width="1" height="1"/><rect x="249" y="5" width="1" height="1"/><rect x="252" y="5" width="1" height="1"/><rect x="255" y="5" width="1" height="1"/><rect x="258" y="5" width="1" height="1"/><rect x="261" y="5" width="1" height="1"/><rect x="264" y="5" width="1" height="1"/><rect x="267" y="5" width="1" height="1"/><rect x="270" y="5" width="1" height="1"/><rect x="273" y="5" width="1" height="1"/><rect x="276" y="5" width="1" height="1"/><rect x="279" y="5" width="1" height="1"/><rect x="282" y="5" width="1" height="1"/><rect x="285" y="5" width="1" height="1"/><rect x="288" y="5" width="1" height="1"/><rect x="291" y="5" width="1" height="1"/><rect x="294" y="5" width="1" height="1"/><rect x="297" y="5" width="1" height="1"/><rect x="300" y="5" width="1" height="1"/><rect x="303" y="5" width="1" height="1"/><rect x="306" y="5" width="1" height="1"/><rect x="309" y="5" width="1" height="1"/><rect x="312" y="5" width="1" height="1"/><rect x="315" y="5" width="1" height="1"/><rect x="318" y="5" width="1" height="1"/><rect x="321" y="5" width="1" height="1"/><rect x="324" y="5" width="1" height="1"/><rect x="327" y="5" width="1" height="1"/><rect x="330" y="5" width="1" height="1"/><rect x="333" y="5" width="1" height="1"/><rect x="336" y="5" width="1" height="1"/><rect x="339" y="5" width="1" height="1"/><rect x="342" y="5" width="1" height="1"/><rect x="345" y="5" width="1" height="1"/><rect x="348" y="5" width="1" height="1"/><rect x="351" y="5" width="1" height="1"/><rect x="354" y="5" width="1" height="1"/><rect x="357" y="5" width="1" height="1"/><rect x="360" y="5" width="1" height="1"/><rect x="363" y="5" width="1" height="1"/><rect x="366" y="5" width="1" height="1"/><rect x="369" y="5" width="1" height="1"/><rect x="372" y="5" width="1" height="1"/><rect x="375" y="5" width="1" height="1"/><rect x="378" y="5" width="1" height="1"/><rect x="381" y="5" width="1" height="1"/><rect x="384" y="5" width="1" height="1"/><rect x="387" y="5" width="1" height="1"/><rect x="390" y="5" width="1" height="1"/><rect x="393" y="5" width="1" height="1"/><rect x="396" y="5" width="1" height="1"/><rect x="399" y="5" width="1" height="1"/><rect x="402" y="5" width="1" height="1"/><rect x="405" y="5" width="1" height="1"/><rect x="408" y="5" width="1" height="1"/><rect x="411" y="5" width="1" height="1"/><rect x="414" y="5" width="1" height="1"/><rect x="417" y="5" width="1" height="1"/><rect x="420" y="5" width="1" height="1"/><rect x="423" y="5" width="1" height="1"/><rect x="426" y="5" width="1" height="1"/><rect x="429" y="5" width="1" height="1"/><rect x="432" y="5" width="1" height="1"/><rect x="435" y="5" width="1" height="1"/><rect x="438" y="5" width="1" height="1"/><rect x="441" y="5" width="1" height="1"/><rect x="444" y="5" width="1" height="1"/><rect x="447" y="5" width="1" height="1"/><rect x="450" y="5" width="1" height="1"/><rect x="453" y="5" width="1" height="1"/><rect x="456" y="5" width="1" height="1"/><rect x="459" y="5" width="1" height="1"/><rect x="462" y="5" width="1" height="1"/><rect x="465" y="5" width="1" height="1"/><rect x="468" y="5" width="1" height="1"/><rect x="471" y="5" width="1" height="1"/><rect x="474" y="5" width="1" height="1"/><rect x="477" y="5" width="1" height="1"/><rect x="480" y="5" width="1" height="1"/><rect x="483" y="5" width="1" height="1"/><rect x="486" y="5" width="1" height="1"/><rect x="489" y="5" width="1" height="1"/><rect x="492" y="5" width="1" height="1"/><rect x="495" y="5" width="1" height="1"/><rect x="498" y="5" width="1" height="1"/><rect x="501" y="5" width="1" height="1"/><rect x="504" y="5" width="1" height="1"/><rect x="507" y="5" width="1" height="1"/></g></svg>
<div class="cb" style="left:600px;top:278px;"><svg width="11" height="11" viewBox="0 0 11 11" style="position:absolute;left:0;top:0"><path d="M1.5 5.5 L4.2 8.3 L9.5 2.2" fill="none" stroke="#333" stroke-width="1.3"/></svg></div>
<div class="t" style="left:617px;top:278px;">时间戳</div>
<div class="cb" style="left:677px;top:278px;"></div>
<div class="t" style="left:693px;top:278px;">Hex</div>
<div class="t" style="left:741px;top:278px;">接收:3081</div>
<div class="btn" style="left:1828px;top:273px;width:71px;height:21px;"><div style="left:0;right:0;top:2px;line-height:21px;display:flex;justify-content:center;align-items:center;height:21px">复位计数</div></div>
<div class="" style="left:596px;top:299px;width:1301px;height:612px;background:#fff;overflow:hidden"></div>
<div style="left:596px;top:299px;width:1301px;height:612px;overflow:hidden">
<div class="log" style="left:1px;top:-10px;color:#008000;letter-spacing:0.6px;">>[Rx<-][09:16:02][asc]</div>
<div class="log" style="left:1px;top:14px;color:#008000;">AT+UART=115200,8,1,NONE</div>
<div class="log" style="left:1px;top:38px;color:#008000;"></div>
<div class="log" style="left:1px;top:62px;color:#008000;">OK</div>
<div class="log" style="left:1px;top:86px;color:#008000;"></div>
<div class="log" style="left:1px;top:110px;color:#008000;"></div>
<div class="log" style="left:1px;top:134px;color:#0000ff;letter-spacing:0.6px;">>[Tx->][09:16:02][asc]</div>
<div class="log" style="left:1px;top:158px;color:#0000ff;">AT+UARTFT=50</div>
<div class="log" style="left:1px;top:182px;color:#0000ff;"></div>
<div class="log" style="left:1px;top:206px;color:#008000;letter-spacing:0.6px;">>[Rx<-][09:16:02][asc]</div>
<div class="log" style="left:1px;top:230px;color:#008000;">AT+UARTFT=50</div>
<div class="log" style="left:1px;top:254px;color:#008000;"></div>
<div class="log" style="left:1px;top:278px;color:#008000;">OK</div>
<div class="log" style="left:1px;top:302px;color:#008000;"></div>
<div class="log" style="left:1px;top:326px;color:#008000;"></div>
<div class="log" style="left:1px;top:350px;color:#0000ff;letter-spacing:0.6px;">>[Tx->][09:16:03][asc]</div>
<div class="log" style="left:1px;top:374px;color:#0000ff;">AT+UARTFL=1024</div>
<div class="log" style="left:1px;top:398px;color:#0000ff;"></div>
<div class="log" style="left:1px;top:422px;color:#000;letter-spacing:0.6px;">>[Rx<-][09:16:03][asc]</div>
<div class="log" style="left:1px;top:446px;color:#000;">AT+UARTFL=1024</div>
<div class="log" style="left:1px;top:470px;color:#000;"></div>
<div class="log" style="left:1px;top:494px;color:#000;">OK</div>
<div class="log" style="left:1px;top:518px;color:#000;"></div>
<div class="log" style="left:1px;top:542px;color:#000;"></div>
<div class="log" style="left:1px;top:566px;color:#000;">执行完毕</div>
</div>
<svg style="position:absolute;left:1899px;top:304px" width="11" height="8"><path d="M2 6 L5.5 2.5 L9 6" fill="none" stroke="#606060" stroke-width="2"/></svg>
<div class="" style="left:1897px;top:877px;width:15px;height:18px;background:#cdcdcd"></div>
<svg style="position:absolute;left:1899px;top:899px" width="11" height="8"><path d="M2 2 L5.5 5.5 L9 2" fill="none" stroke="#606060" stroke-width="2"/></svg>
<div style="left:596px;top:914px;width:1317px;height:7px;background:#fff"></div>
<div style="left:596px;top:916px;width:1316px;height:1px;background:#a0a0a0"></div>
<div style="left:596px;top:919px;width:1316px;height:1px;background:#a0a0a0"></div>
<div style="left:1912px;top:914px;width:1px;height:6px;background:#a0a0a0"></div>
<svg style="position:absolute;left:991px;top:912px" width="527" height="10" viewBox="0 0 527 10"><rect x="0.5" y="0.5" width="525" height="9" fill="#f0f0f0" stroke="#959595"/><path d="M1.5 9 V1.5 H525" fill="none" stroke="#fff"/><g fill="#1a73d0"><path d="M5.5 4 L8.5 7 L11.5 4 Z"/><path d="M515.5 4 L518.5 7 L521.5 4 Z"/><rect x="15" y="5" width="1" height="1"/><rect x="18" y="5" width="1" height="1"/><rect x="21" y="5" width="1" height="1"/><rect x="24" y="5" width="1" height="1"/><rect x="27" y="5" width="1" height="1"/><rect x="30" y="5" width="1" height="1"/><rect x="33" y="5" width="1" height="1"/><rect x="36" y="5" width="1" height="1"/><rect x="39" y="5" width="1" height="1"/><rect x="42" y="5" width="1" height="1"/><rect x="45" y="5" width="1" height="1"/><rect x="48" y="5" width="1" height="1"/><rect x="51" y="5" width="1" height="1"/><rect x="54" y="5" width="1" height="1"/><rect x="57" y="5" width="1" height="1"/><rect x="60" y="5" width="1" height="1"/><rect x="63" y="5" width="1" height="1"/><rect x="66" y="5" width="1" height="1"/><rect x="69" y="5" width="1" height="1"/><rect x="72" y="5" width="1" height="1"/><rect x="75" y="5" width="1" height="1"/><rect x="78" y="5" width="1" height="1"/><rect x="81" y="5" width="1" height="1"/><rect x="84" y="5" width="1" height="1"/><rect x="87" y="5" width="1" height="1"/><rect x="90" y="5" width="1" height="1"/><rect x="93" y="5" width="1" height="1"/><rect x="96" y="5" width="1" height="1"/><rect x="99" y="5" width="1" height="1"/><rect x="102" y="5" width="1" height="1"/><rect x="105" y="5" width="1" height="1"/><rect x="108" y="5" width="1" height="1"/><rect x="111" y="5" width="1" height="1"/><rect x="114" y="5" width="1" height="1"/><rect x="117" y="5" width="1" height="1"/><rect x="120" y="5" width="1" height="1"/><rect x="123" y="5" width="1" height="1"/><rect x="126" y="5" width="1" height="1"/><rect x="129" y="5" width="1" height="1"/><rect x="132" y="5" width="1" height="1"/><rect x="135" y="5" width="1" height="1"/><rect x="138" y="5" width="1" height="1"/><rect x="141" y="5" width="1" height="1"/><rect x="144" y="5" width="1" height="1"/><rect x="147" y="5" width="1" height="1"/><rect x="150" y="5" width="1" height="1"/><rect x="153" y="5" width="1" height="1"/><rect x="156" y="5" width="1" height="1"/><rect x="159" y="5" width="1" height="1"/><rect x="162" y="5" width="1" height="1"/><rect x="165" y="5" width="1" height="1"/><rect x="168" y="5" width="1" height="1"/><rect x="171" y="5" width="1" height="1"/><rect x="174" y="5" width="1" height="1"/><rect x="177" y="5" width="1" height="1"/><rect x="180" y="5" width="1" height="1"/><rect x="183" y="5" width="1" height="1"/><rect x="186" y="5" width="1" height="1"/><rect x="189" y="5" width="1" height="1"/><rect x="192" y="5" width="1" height="1"/><rect x="195" y="5" width="1" height="1"/><rect x="198" y="5" width="1" height="1"/><rect x="201" y="5" width="1" height="1"/><rect x="204" y="5" width="1" height="1"/><rect x="207" y="5" width="1" height="1"/><rect x="210" y="5" width="1" height="1"/><rect x="213" y="5" width="1" height="1"/><rect x="216" y="5" width="1" height="1"/><rect x="219" y="5" width="1" height="1"/><rect x="222" y="5" width="1" height="1"/><rect x="225" y="5" width="1" height="1"/><rect x="228" y="5" width="1" height="1"/><rect x="231" y="5" width="1" height="1"/><rect x="234" y="5" width="1" height="1"/><rect x="237" y="5" width="1" height="1"/><rect x="240" y="5" width="1" height="1"/><rect x="243" y="5" width="1" height="1"/><rect x="246" y="5" width="1" height="1"/><rect x="249" y="5" width="1" height="1"/><rect x="252" y="5" width="1" height="1"/><rect x="255" y="5" width="1" height="1"/><rect x="258" y="5" width="1" height="1"/><rect x="261" y="5" width="1" height="1"/><rect x="264" y="5" width="1" height="1"/><rect x="267" y="5" width="1" height="1"/><rect x="270" y="5" width="1" height="1"/><rect x="273" y="5" width="1" height="1"/><rect x="276" y="5" width="1" height="1"/><rect x="279" y="5" width="1" height="1"/><rect x="282" y="5" width="1" height="1"/><rect x="285" y="5" width="1" height="1"/><rect x="288" y="5" width="1" height="1"/><rect x="291" y="5" width="1" height="1"/><rect x="294" y="5" width="1" height="1"/><rect x="297" y="5" width="1" height="1"/><rect x="300" y="5" width="1" height="1"/><rect x="303" y="5" width="1" height="1"/><rect x="306" y="5" width="1" height="1"/><rect x="309" y="5" width="1" height="1"/><rect x="312" y="5" width="1" height="1"/><rect x="315" y="5" width="1" height="1"/><rect x="318" y="5" width="1" height="1"/><rect x="321" y="5" width="1" height="1"/><rect x="324" y="5" width="1" height="1"/><rect x="327" y="5" width="1" height="1"/><rect x="330" y="5" width="1" height="1"/><rect x="333" y="5" width="1" height="1"/><rect x="336" y="5" width="1" height="1"/><rect x="339" y="5" width="1" height="1"/><rect x="342" y="5" width="1" height="1"/><rect x="345" y="5" width="1" height="1"/><rect x="348" y="5" width="1" height="1"/><rect x="351" y="5" width="1" height="1"/><rect x="354" y="5" width="1" height="1"/><rect x="357" y="5" width="1" height="1"/><rect x="360" y="5" width="1" height="1"/><rect x="363" y="5" width="1" height="1"/><rect x="366" y="5" width="1" height="1"/><rect x="369" y="5" width="1" height="1"/><rect x="372" y="5" width="1" height="1"/><rect x="375" y="5" width="1" height="1"/><rect x="378" y="5" width="1" height="1"/><rect x="381" y="5" width="1" height="1"/><rect x="384" y="5" width="1" height="1"/><rect x="387" y="5" width="1" height="1"/><rect x="390" y="5" width="1" height="1"/><rect x="393" y="5" width="1" height="1"/><rect x="396" y="5" width="1" height="1"/><rect x="399" y="5" width="1" height="1"/><rect x="402" y="5" width="1" height="1"/><rect x="405" y="5" width="1" height="1"/><rect x="408" y="5" width="1" height="1"/><rect x="411" y="5" width="1" height="1"/><rect x="414" y="5" width="1" height="1"/><rect x="417" y="5" width="1" height="1"/><rect x="420" y="5" width="1" height="1"/><rect x="423" y="5" width="1" height="1"/><rect x="426" y="5" width="1" height="1"/><rect x="429" y="5" width="1" height="1"/><rect x="432" y="5" width="1" height="1"/><rect x="435" y="5" width="1" height="1"/><rect x="438" y="5" width="1" height="1"/><rect x="441" y="5" width="1" height="1"/><rect x="444" y="5" width="1" height="1"/><rect x="447" y="5" width="1" height="1"/><rect x="450" y="5" width="1" height="1"/><rect x="453" y="5" width="1" height="1"/><rect x="456" y="5" width="1" height="1"/><rect x="459" y="5" width="1" height="1"/><rect x="462" y="5" width="1" height="1"/><rect x="465" y="5" width="1" height="1"/><rect x="468" y="5" width="1" height="1"/><rect x="471" y="5" width="1" height="1"/><rect x="474" y="5" width="1" height="1"/><rect x="477" y="5" width="1" height="1"/><rect x="480" y="5" width="1" height="1"/><rect x="483" y="5" width="1" height="1"/><rect x="486" y="5" width="1" height="1"/><rect x="489" y="5" width="1" height="1"/><rect x="492" y="5" width="1" height="1"/><rect x="495" y="5" width="1" height="1"/><rect x="498" y="5" width="1" height="1"/><rect x="501" y="5" width="1" height="1"/><rect x="504" y="5" width="1" height="1"/><rect x="507" y="5" width="1" height="1"/></g></svg>
<div class="" style="left:596px;top:922px;width:1317px;height:91px;background:linear-gradient(#fff 0px,#fff 63px,#e3e3e3 91px)"></div>
<div class="t" style="left:607px;top:993px;">通过串口发送</div>
<div style="left:687px;top:999px;width:0;height:0;border-left:3px solid transparent;border-right:3px solid transparent;border-top:3px solid #222"></div>
<div class="cb" style="left:741px;top:993px;"></div>
<div class="t" style="left:757px;top:993px;">Hex</div>
<div class="t" style="left:804px;top:993px;">发送:0</div>
<svg style="position:absolute;left:1832px;top:990px" width="20" height="20" viewBox="0 0 20 20">
<defs><radialGradient id="spk" cx="0.4" cy="0.35" r="0.7"><stop offset="0" stop-color="#f4f4f4"/><stop offset="0.6" stop-color="#9a9a9a"/><stop offset="1" stop-color="#444"/></radialGradient></defs>
<ellipse cx="8.2" cy="8" rx="6" ry="6.3" fill="url(#spk)" stroke="#333" stroke-width="1"/>
<ellipse cx="7" cy="6.8" rx="2.8" ry="3" fill="#c8c8c8" stroke="#222" stroke-width="0.9"/>
<circle cx="6.5" cy="6" r="1.1" fill="#fff"/>
<path d="M11 16 Q15 14.5 15.8 10.5 M11.8 17 Q16.5 15.5 17.2 11" fill="none" stroke="#8c8cf0" stroke-width="0.9"/>
</svg>
<div class="t" style="left:1853px;top:993px;">发送</div>
<div style="left:1891px;top:999px;width:0;height:0;border-left:3px solid transparent;border-right:3px solid transparent;border-top:3px solid #222"></div>
<div class="" style="left:0px;top:1021px;width:1920px;height:1px;background:#d8d8d8"></div>
</body></html>
